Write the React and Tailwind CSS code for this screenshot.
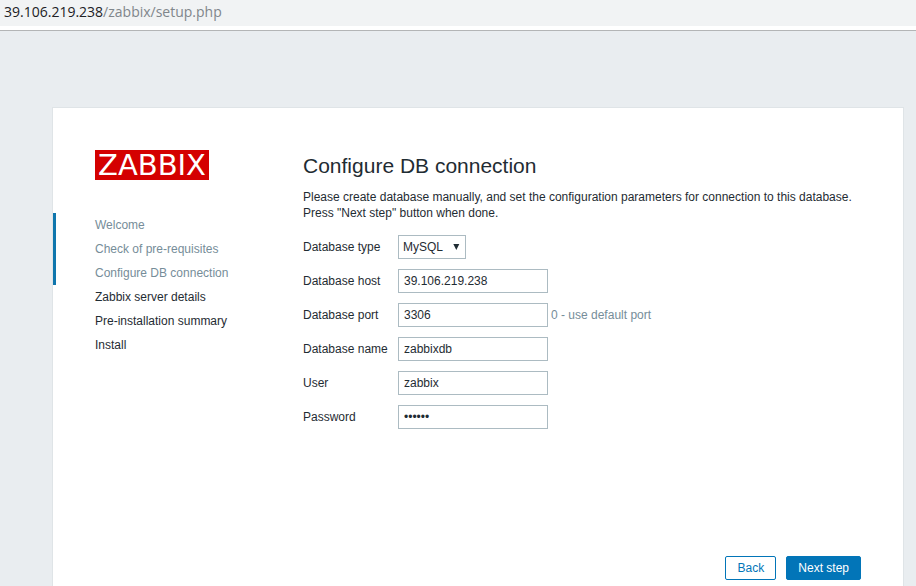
const steps = [
  { name: "Welcome", reached: true },
  { name: "Check of pre-requisites", reached: true },
  { name: "Configure DB connection", reached: true },
  { name: "Zabbix server details", reached: false },
  { name: "Pre-installation summary", reached: false },
  { name: "Install", reached: false },
];

const fields = [
  { id: "host", label: "Database host", type: "text", value: "39.106.219.238" },
  { id: "port", label: "Database port", type: "text", value: "3306", hint: "0 - use default port" },
  { id: "name", label: "Database name", type: "text", value: "zabbixdb" },
  { id: "user", label: "User", type: "text", value: "zabbix" },
  { id: "password", label: "Password", type: "password", value: "zabbix" },
];

function AddressBar() {
  return (
    <header className="border-b border-[#b3b5b6] bg-white pb-1">
      <div className="h-[26px] bg-[#f1f3f4] pl-1 font-['Open_Sans',sans-serif] text-[14px] leading-6 text-[#202124]">
        39.106.219.238<span className="text-[#80868b]">/zabbix/setup.php</span>
      </div>
    </header>
  );
}

function Logo() {
  return (
    <div className="ml-[42px] flex h-[30px] w-[114px] items-center justify-center bg-[#d40000] font-['DejaVu_Sans',sans-serif] text-[29px] leading-[30px] text-white">
      ZABBIX
    </div>
  );
}

function StepList() {
  return (
    <ul className="mt-[33px]">
      {steps.map((step) => (
        <li
          key={step.name}
          className={
            step.reached
              ? "border-l-[3px] border-[#0f76ad] pl-[39px] leading-6 text-[#768d99]"
              : "border-l-[3px] border-transparent pl-[39px] leading-6"
          }
        >
          {step.name}
        </li>
      ))}
    </ul>
  );
}

function Field({ id, label, type, value, hint }) {
  return (
    <div className="flex items-center">
      <label htmlFor={id} className="w-[95px] shrink-0">
        {label}
      </label>
      <input
        id={id}
        type={type}
        defaultValue={value}
        className="h-6 w-[150px] border border-[#acbbc2] bg-white px-[5px] outline-none"
      />
      {hint && <span className="ml-[3px] text-[#768d99]">{hint}</span>}
    </div>
  );
}

export default function App() {
  return (
    <div className="flex min-h-screen flex-col bg-[#e9edf0] font-['Liberation_Sans',Arial,sans-serif] text-[12px] leading-4 text-[#1f2c33]">
      <AddressBar />
      <main className="mt-[76px] mr-3 ml-[52px] flex flex-1 flex-col border border-b-0 border-[#dfe4e7] bg-white pt-[42px]">
        <div className="flex">
          <nav className="w-[250px] shrink-0">
            <Logo />
            <StepList />
          </nav>
          <section className="flex-1 pt-1 pr-[42px]">
            <h1 className="text-[21px] leading-6">Configure DB connection</h1>
            <p className="mt-[11px]">
              Please create database manually, and set the configuration parameters for connection to this
              database.
              <br />
              Press "Next step" button when done.
            </p>
            <form className="mt-[14px] flex flex-col gap-[10px]">
              <div className="flex items-center">
                <label htmlFor="type" className="w-[95px] shrink-0">
                  Database type
                </label>
                <div className="relative">
                  <select
                    id="type"
                    className="block h-6 w-[68px] appearance-none border border-[#acbbc2] bg-white pl-1 outline-none"
                  >
                    <option>MySQL</option>
                    <option>PostgreSQL</option>
                  </select>
                  <svg
                    viewBox="0 0 7 6"
                    className="pointer-events-none absolute top-[9px] right-[6px] h-[6px] w-[7px]"
                    aria-hidden="true"
                  >
                    <path d="M0.3 0h6L3.3 6z" fill="#1f2c33" />
                  </svg>
                </div>
              </div>
              {fields.map((field) => (
                <Field key={field.id} {...field} />
              ))}
            </form>
          </section>
        </div>
        <footer className="mt-auto flex justify-end gap-[10px] pr-[42px] pb-[6px]">
          <button type="button" className="h-6 min-w-[51px] rounded-xs border border-[#0275b8] px-[11px] text-[#0275b8]">
            Back
          </button>
          <button type="button" className="h-6 rounded-xs border border-[#0275b8] bg-[#0275b8] px-[11px] text-white">
            Next step
          </button>
        </footer>
      </main>
    </div>
  );
}
